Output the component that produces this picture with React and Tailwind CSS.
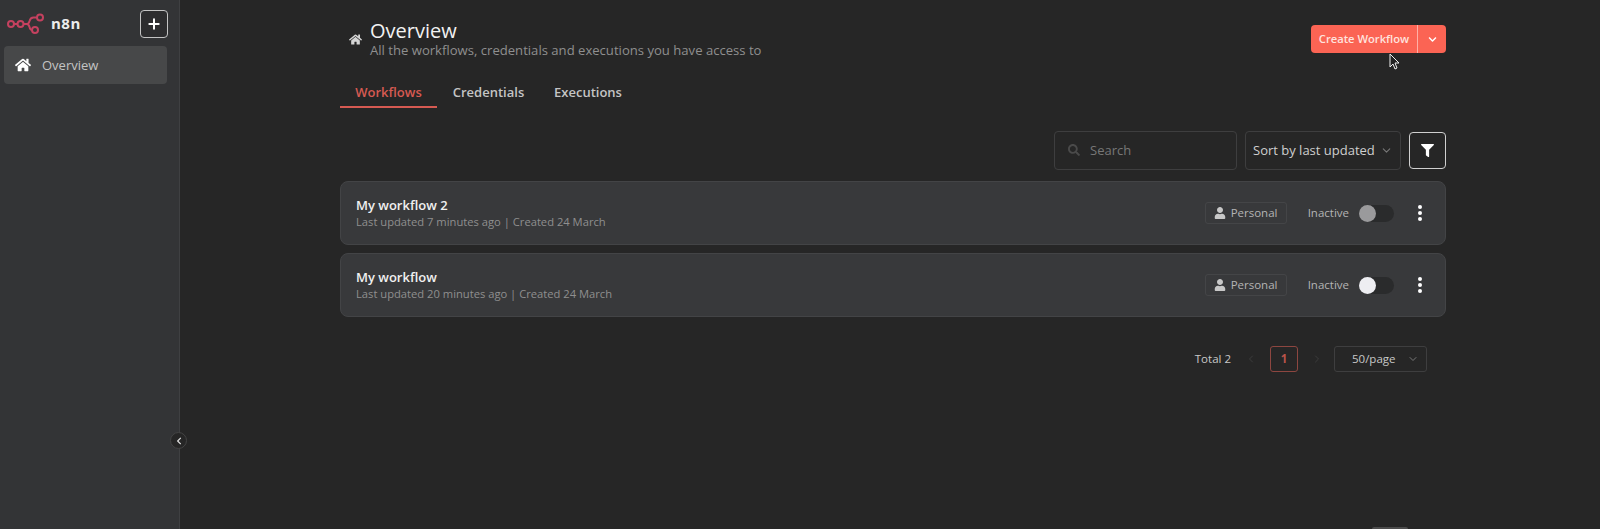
import React from 'react';
import { ChevronDown, ChevronLeft, ChevronRight, Plus } from 'lucide-react';
import { FaHome, FaUser, FaFilter, FaSearch, FaChevronLeft, FaChevronDown } from 'react-icons/fa';

const Logo = () => (
  <svg width="38" height="24" viewBox="0 0 38 24" fill="none" stroke="#c4415f" strokeWidth="2">
    <circle cx="4" cy="12" r="3" />
    <circle cx="13.5" cy="12" r="3" />
    <circle cx="33" cy="5.5" r="3" />
    <circle cx="28" cy="18" r="3" />
    <path d="M7 12h3.500M16.500 12h3c2.500 0 2.500-1.500 3-3 .6-2.200 2-3.500 4-3.500H30M19.500 12c2 0 2.500 1 3 3 .5 2 1.500 3 2.500 3" />
  </svg>
);

const workflows = [
  { name: 'My workflow 2', meta: 'Last updated 7 minutes ago | Created 24 March', knob: 'bg-[#9a9a9c]' },
  { name: 'My workflow', meta: 'Last updated 20 minutes ago | Created 24 March', knob: 'bg-[#eeeef2]' },
];

const WorkflowCard = ({ name, meta, knob }) => (
  <div className="h-[64px] flex items-center justify-between pl-[15px] pr-[23px] rounded-lg bg-[#38393b] border border-[#434446]">
    <div className="flex flex-col">
      <span className="text-[13px] leading-[17px] font-semibold text-[#f0f0f0]">{name}</span>
      <span className="text-[11.200px] leading-[15px] text-[#8f8f8f]">{meta}</span>
    </div>
    <div className="flex items-center">
      <div className="flex items-center gap-[5px] h-[22px] w-[82px] pl-[8px] rounded-[3px] border border-[#444547] text-[11.500px] text-[#b4b4b4]">
        <FaUser size={12} className="text-[#c8c8c8]" />
        Personal
      </div>
      <span className="ml-[21px] text-[11.500px] text-[#b4b4b4]">Inactive</span>
      <div className="ml-[10px] w-[35px] h-[17px] rounded-full bg-[#2a2b2c] relative">
        <div className={`absolute left-0 top-0 w-[17px] h-[17px] rounded-full ${knob}`} />
      </div>
      <div className="ml-[24px] flex flex-col gap-[2px]">
        <span className="w-[4px] h-[4px] rounded-full bg-white" />
        <span className="w-[4px] h-[4px] rounded-full bg-white" />
        <span className="w-[4px] h-[4px] rounded-full bg-white" />
      </div>
    </div>
  </div>
);

export default function App() {
  return (
    <div className="relative flex h-[529px] w-[1600px] overflow-hidden bg-[#262626] font-['Open_Sans',sans-serif]">
      {/* Sidebar */}
      <aside className="w-[180px] shrink-0 bg-[#333436] border-r border-[#3f4042] px-[4px]">
        <div className="flex items-center justify-between h-[46px] pl-[3px] pr-[7px] pt-[1px]">
          <div className="flex items-center gap-[6px]">
            <Logo />
            <span className="text-[15px] font-bold text-[#ececec] tracking-[0.5px]">n8n</span>
          </div>
          <button className="w-[28px] h-[28px] rounded-[4px] border border-[#c4c4c4] flex items-center justify-center bg-[#2d2d2f]">
            <Plus size={16} strokeWidth={3} className="text-white" />
          </button>
        </div>
        <div className="h-[38px] w-[163px] rounded-[4px] bg-[#474849] flex items-center pl-[11px] gap-[11px] text-[13px] text-[#c4c4c4]">
          <FaHome size={16} className="text-white" />
          <span className="pt-[1px]">Overview</span>
        </div>
      </aside>

      {/* Main */}
      <main className="flex-1 pl-[160px] pr-[154px]">
        <div className="flex justify-between pt-[18px] h-[75px]">
          <div className="flex items-center gap-[8px] pl-[9px] self-start">
            <FaHome size={13} className="text-[#d4d4d4] mt-[3px]" />
            <div className="flex flex-col">
              <span className="text-[20px] leading-[25px] text-[#f2f2f2]">Overview</span>
              <span className="text-[13.100px] leading-[15px] text-[#8f8f8f]">All the workflows, credentials and executions you have access to</span>
            </div>
          </div>
          <div className="mt-[7px] h-[28px] flex rounded-[4px] bg-[#fb6454] text-white self-start">
            <span className="w-[106px] flex items-center justify-center text-[11.200px] font-semibold text-[#ffe3df]">Create Workflow</span>
            <span className="w-[29px] border-l border-[#ffb0a6] flex items-center justify-center">
              <FaChevronDown size={9} />
            </span>
          </div>
        </div>

        {/* Tabs */}
        <div className="flex h-[33px] text-[13px] font-semibold text-[#c4c4c4]">
          <span className="w-[97px] flex items-start justify-center pt-[8px] border-b-2 border-[#d65a52] text-[#d65a52]">Workflows</span>
          <span className="w-[103px] flex items-start justify-center pt-[8px]">Credentials</span>
          <span className="w-[96px] flex items-start justify-center pt-[8px]">Executions</span>
        </div>

        {/* Toolbar */}
        <div className="mt-[22px] flex justify-end items-center h-[40px]">
          <div className="w-[183px] h-[39px] rounded-[4px] border border-[#3e3e3f] flex items-center pl-[13px] gap-[10px] text-[13px] text-[#777]">
            <FaSearch size={12} className="text-[#4a4a4a]" />
            <span className="pt-[1px]">Search</span>
          </div>
          <div className="ml-[8px] w-[156px] h-[39px] rounded-[4px] border border-[#3e3e3f] flex items-center justify-between pl-[7px] pr-[7px] text-[13px] whitespace-nowrap text-[#cfcfcf]">
            <span className="pt-[1px]">Sort by last updated</span>
            <ChevronDown size={13} className="shrink-0 text-[#777]" />
          </div>
          <button className="ml-[8px] w-[37px] h-[37px] rounded-[4px] border border-[#d0d0d0] flex items-center justify-center">
            <FaFilter size={13} className="text-white" />
          </button>
        </div>

        {/* List */}
        <div className="mt-[11px] flex flex-col gap-[8px]">
          {workflows.map((w) => (
            <WorkflowCard key={w.name} {...w} />
          ))}
        </div>

        {/* Pagination */}
        <div className="mt-[29px] flex items-center pr-[19px] justify-end text-[11.500px] text-[#c8c8c8]">
          <span>Total 2</span>
          <ChevronLeft size={12} className="ml-[14px] text-[#3c3c3c]" />
          <span className="ml-[13px] w-[28px] h-[26px] rounded-[3px] border border-[#8d4640] flex items-center justify-center font-bold text-[#b8534a]">1</span>
          <ChevronRight size={12} className="ml-[13px] text-[#3c3c3c]" />
          <div className="ml-[11px] w-[93px] h-[26px] rounded-[3px] border border-[#3e3e3f] flex items-center justify-between pl-[17px] pr-[7px]">
            50/page
            <ChevronDown size={12} className="text-[#777]" />
          </div>
        </div>
      </main>

      {/* Collapse toggle */}
      <div className="absolute left-[170px] top-[432px] w-[17px] h-[17px] rounded-full bg-[#262626] border border-[#444] flex items-center justify-center">
        <FaChevronLeft size={8} className="text-[#e0e0e0]" />
      </div>

      {/* Mouse cursor */}
      <svg className="absolute left-[1389px] top-[53px]" width="12" height="18" viewBox="0 0 12 18">
        <path d="M1 1v13l3-3 2 5 2-1-2-5h4z" fill="#222" stroke="#eee" strokeWidth="1" />
      </svg>

      {/* Sliver of something cut off at the bottom edge */}
      <div className="absolute left-[1372px] top-[527px] w-[36px] h-[2px] rounded-t-full bg-[#4c4c4c]" />
    </div>
  );
}
